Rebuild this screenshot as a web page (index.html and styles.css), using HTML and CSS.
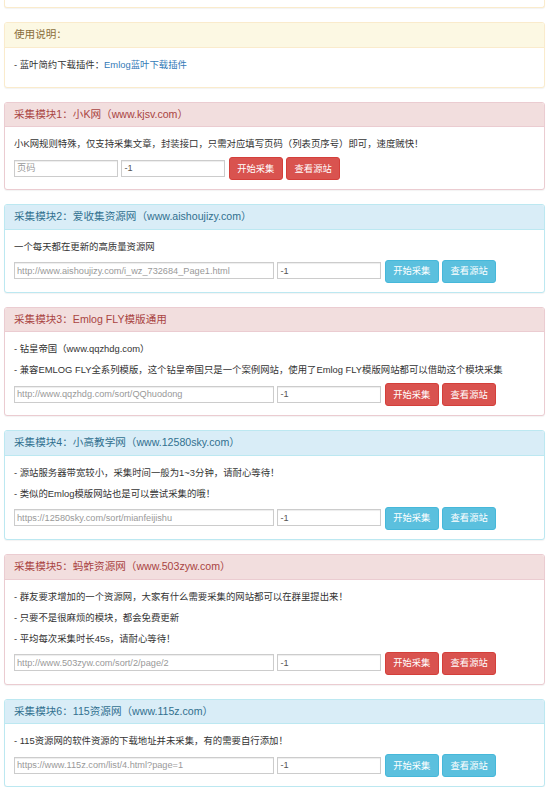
FILE: index.html
```html
<!DOCTYPE html>
<html lang="zh-CN">
<head>
<meta charset="utf-8">
<title>采集模块</title>
<link rel="stylesheet" href="styles.css">
</head>
<body>
<div class="page">
  <div class="panel panel-warning panel-tail"></div>

  <div class="panel panel-warning">
    <div class="panel-heading">使用说明：</div>
    <div class="panel-body">
      <p>- 蓝叶简约下载插件：<a href="#">Emlog蓝叶下载插件</a></p>
    </div>
  </div>

  <div class="panel panel-danger">
    <div class="panel-heading">采集模块1：小K网（www.kjsv.com）</div>
    <div class="panel-body">
      <p>小K网规则特殊，仅支持采集文章，封装接口，只需对应填写页码（列表页序号）即可，速度贼快！</p>
      <div class="controls">
        <input class="field field-short" type="text" placeholder="页码">
        <input class="field field-short" type="text" value="-1">
        <button class="btn btn-danger">开始采集</button>
        <button class="btn btn-danger">查看源站</button>
      </div>
    </div>
  </div>

  <div class="panel panel-info">
    <div class="panel-heading">采集模块2：爱收集资源网（www.aishoujizy.com）</div>
    <div class="panel-body">
      <p>一个每天都在更新的高质量资源网</p>
      <div class="controls">
        <input class="field field-long" type="text" placeholder="http://www.aishoujizy.com/i_wz_732684_Page1.html">
        <input class="field field-short" type="text" value="-1">
        <button class="btn btn-info">开始采集</button>
        <button class="btn btn-info">查看源站</button>
      </div>
    </div>
  </div>

  <div class="panel panel-danger">
    <div class="panel-heading">采集模块3：Emlog FLY模版通用</div>
    <div class="panel-body">
      <p>- 钻皇帝国（www.qqzhdg.com）</p>
      <p>- 兼容EMLOG FLY全系列模版，这个钻皇帝国只是一个案例网站，使用了Emlog FLY模版网站都可以借助这个模块采集</p>
      <div class="controls">
        <input class="field field-long" type="text" placeholder="http://www.qqzhdg.com/sort/QQhuodong">
        <input class="field field-short" type="text" value="-1">
        <button class="btn btn-danger">开始采集</button>
        <button class="btn btn-danger">查看源站</button>
      </div>
    </div>
  </div>

  <div class="panel panel-info">
    <div class="panel-heading">采集模块4：小高教学网（www.12580sky.com）</div>
    <div class="panel-body">
      <p>- 源站服务器带宽较小，采集时间一般为1~3分钟，请耐心等待！</p>
      <p>- 类似的Emlog模版网站也是可以尝试采集的哦！</p>
      <div class="controls">
        <input class="field field-long" type="text" placeholder="https://12580sky.com/sort/mianfeijishu">
        <input class="field field-short" type="text" value="-1">
        <button class="btn btn-info">开始采集</button>
        <button class="btn btn-info">查看源站</button>
      </div>
    </div>
  </div>

  <div class="panel panel-danger">
    <div class="panel-heading">采集模块5：蚂蚱资源网（www.503zyw.com）</div>
    <div class="panel-body">
      <p>- 群友要求增加的一个资源网，大家有什么需要采集的网站都可以在群里提出来！</p>
      <p>- 只要不是很麻烦的模块，都会免费更新</p>
      <p>- 平均每次采集时长45s，请耐心等待！</p>
      <div class="controls">
        <input class="field field-long" type="text" placeholder="http://www.503zyw.com/sort/2/page/2">
        <input class="field field-short" type="text" value="-1">
        <button class="btn btn-danger">开始采集</button>
        <button class="btn btn-danger">查看源站</button>
      </div>
    </div>
  </div>

  <div class="panel panel-info">
    <div class="panel-heading">采集模块6：115资源网（www.115z.com）</div>
    <div class="panel-body">
      <p>- 115资源网的软件资源的下载地址并未采集，有的需要自行添加！</p>
      <div class="controls">
        <input class="field field-long" type="text" placeholder="https://www.115z.com/list/4.html?page=1">
        <input class="field field-short" type="text" value="-1">
        <button class="btn btn-info">开始采集</button>
        <button class="btn btn-info">查看源站</button>
      </div>
    </div>
  </div>
</div>
</body>
</html>
```

FILE: styles.css
```css
html, body {
  margin: 0;
  padding: 0;
  background: #fff;
}

body {
  font-family: "Liberation Sans", "Noto Sans CJK SC", sans-serif;
  font-size: 9.4px;
  color: #333;
}

.page {
  display: flex;
  flex-direction: column;
  gap: 14px;
  padding: 0 1px 0 4px;
}

.panel {
  background: #fff;
  border: 1px solid transparent;
  border-radius: 3px;
  box-shadow: 0 1px 1px rgba(0, 0, 0, 0.05);
}

.panel-tail {
  height: 7px;
  border-top: none;
  border-top-left-radius: 0;
  border-top-right-radius: 0;
}

.panel-heading {
  padding: 5px 9px;
  line-height: 13.6px;
  font-size: 10.6px;
  border-bottom: 1px solid transparent;
  border-top-left-radius: 2px;
  border-top-right-radius: 2px;
}

.panel-warning { border-color: #faebcc; }
.panel-warning .panel-heading { background: #fcf8e3; color: #8a6d3b; border-bottom-color: #faebcc; }

.panel-danger { border-color: #ebccd1; }
.panel-danger .panel-heading { background: #f2dede; color: #a94442; border-bottom-color: #ebccd1; }

.panel-info { border-color: #bce8f1; }
.panel-info .panel-heading { background: #d9edf7; color: #31708f; border-bottom-color: #bce8f1; }

.panel-body {
  padding: 9px 9px 9px 9px;
}

.panel-body p {
  margin: 0 0 5px;
  line-height: 16px;
}

.panel-body a {
  color: #337ab7;
  text-decoration: none;
}

.controls {
  display: flex;
  align-items: center;
  gap: 3.4px;
}

.field {
  box-sizing: border-box;
  height: 17px;
  margin: 0 0 1px;
  padding: 0 2px;
  border: 1px solid #ccc;
  border-radius: 0;
  box-shadow: inset 0 1px 1px rgba(0, 0, 0, 0.075);
  font-family: "Liberation Sans", "Noto Sans CJK SC", sans-serif;
  font-size: 9.2px;
  color: #555;
  background: #fff;
  outline: none;
}

.field::placeholder {
  color: #999;
}

.field-short { width: 104px; }
.field-long { width: 260px; }

.btn {
  box-sizing: border-box;
  width: 54px;
  height: 23px;
  padding: 0;
  border: 1px solid transparent;
  border-radius: 3px;
  font-family: "Liberation Sans", "Noto Sans CJK SC", sans-serif;
  font-size: 9.3px;
  line-height: 14px;
  color: #fff;
  cursor: pointer;
}

.btn-danger { background: #d9534f; border-color: #d43f3a; }
.btn-info { background: #5bc0de; border-color: #46b8da; }
```
